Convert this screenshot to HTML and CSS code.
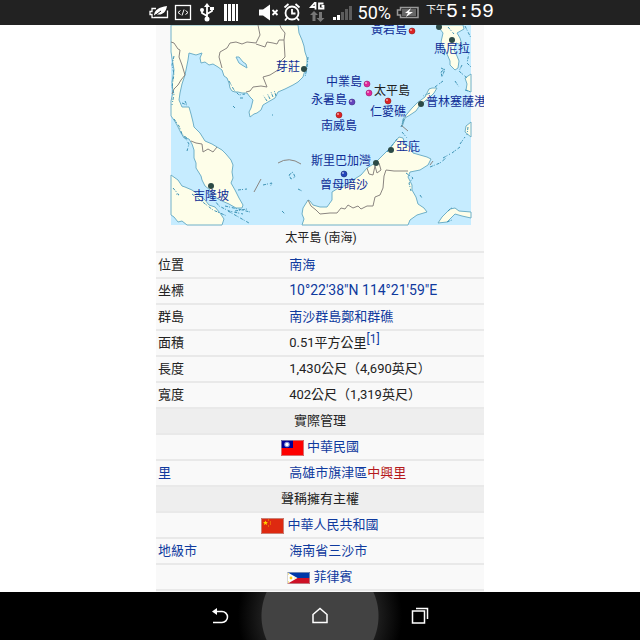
FILE: index.html
```html
<!DOCTYPE html>
<html lang="zh-Hant">
<head>
<meta charset="utf-8">
<meta name="viewport" content="width=device-width, initial-scale=1">
<title>太平島</title>
<link rel="stylesheet" href="styles.css">
</head>
<body>
<header class="status">
  <svg class="status-icons" width="92" height="24" viewBox="147 0 92 24" aria-hidden="true">
    <g fill="none" stroke="#fff" stroke-width="1.3">
      <path d="M155 8.500h-4v3h-2v3h2v3h15.500v-7"/>
      <path d="M153 16c0-6 5-9 13-10-1 7-6 10-11 8z" fill="#fff" stroke="none"/>
      <path d="M152 17l8-6" stroke="#222" stroke-width="1"/>
      <rect x="174.500" y="5.500" width="15" height="14"/>
      <path d="M179.500 10.500l-2.500 2 2.500 2M184.500 10.500l2.500 2-2.500 2M183 9.500l-2 6" stroke-width="1"/>
      <path d="M206 6v13M206 16l-5-3v-3M206 14l5-3v-2" stroke-width="1.800"/>
    </g>
    <g fill="#fff">
      <path d="M206 3l3 4h-6z"/><circle cx="206" cy="19" r="2.500"/><circle cx="201" cy="10" r="2"/><rect x="209" y="7" width="4" height="3"/>
      <path d="M223 4h3v17h-3zM227 4h3v17h-3zM231 4h3v17h-3zM235 4h2v17h-2z"/>
    </g>
  </svg>
  <svg class="status-icons" width="97" height="24" viewBox="257 0 97 24" aria-hidden="true">
    <path d="M258 9.500h4l7-5v16l-7-5h-4z" fill="#fff"/>
    <g fill="none" stroke="#fff" stroke-width="1.800">
      <path d="M271.500 10l5 5M276.500 10l-5 5"/>
      <circle cx="291" cy="13" r="6.500"/>
      <path d="M291 9v4.500h3.500M283.500 7.500l4-3.500M298.500 7.500l-4-3.500M286 18l-2 2.500M296 18l2 2.500"/>
      <path d="M314 2.500l-4 4.500h5M314.500 2v7.500M322.500 3.500h-4.500v5h4.500v-2.500h-2"/>
    </g>
    <path d="M313 11l4 4h-2.500v6h-3v-6h-2.500zM319.500 22l-4-4h2.500v-6h3v6h2.500z" fill="#777"/>
    <path d="M332 17h3v3h-3zM336 15h3v5h-3z" fill="#fff"/>
    <path d="M340 12h3v8h-3zM344 9h3v11h-3zM348 6h3v14h-3z" fill="#5c5c5c"/>
  </svg>
  <span class="percent">50%</span>
  <svg class="status-icons battery" width="24" height="24" viewBox="394 0 24 24" aria-hidden="true">
    <path d="M399.500 7.500h17.500v10h-17.500v-2.500h-3v-5h3z" fill="#222" stroke="#999" stroke-width="1.500"/>
    <path d="M401 9h14v7h-14z" fill="#666"/>
    <path d="M410 8l-6 5h3l-2 4 7-5h-4z" fill="#fff"/>
  </svg>
  <span class="ampm">下午</span>
  <time class="clock">5:59</time>
</header>

<main class="page">
  <section class="infobox">
    <figure class="location">
      <svg class="map" viewBox="171 25 300 200" role="img" aria-label="太平島 (南海)">
        <rect class="sea" x="171" y="25" width="300" height="200"/>
        <g class="land">
          <path d="M171 25H298L299 33 302 40 304 46 305 52 307 58 307 64 305 70 303 77 298 82 293 85 285 89 278 92 275 98 268 102 263 105 261 110 257 113 254 114 250 117 249 112 251 108 253 100 250 97 247 93 242 93 238 92 235 92 232 91 230 88 229 83 227 78 224 76 222 70 218 67 213 64 209 65 205 62 201 63 200 58 202 53 196 55 189 53 188 60 187 65 185 75 182 84 180 93 179 100 182 107 189 107 191 114 193 122 194 127 200 133 205 141 212 144 217 147 222 150 226 154 231 160 233 165 232 172 233 178 231 183 235 190 239 198 243 205 242 208 236 208 229 204 222 201 213 196 210 190 205 186 202 180 201 176 196 168 196 163 194 158 194 150 192 144 189 139 184 138 181 133 177 125 174 120 171 116V101L173 92 172 82 174 70 172 58 171 52Z"/>
          <path d="M171 175L178 180 182 186 185 187 192 190 199 195 205 200 209 205 215 207 220 213 224 219 222 225H187L182 221 178 222 174 217 171 215Z"/>
          <path d="M308 200L303 208 302 214 304 219 302 225H408L410 220 417 215 427 212 424 208 418 204 416 197 412 190 412 185 408 177 410 172 420 170 428 165 431 159 427 157 420 155 413 153 410 147 405 144 403 138 399 137 394 143 390 148 383 155 375 163 367 168 361 175 353 180 347 185 340 187 332 192 332 200 327 207 320 207 313 205 310 201Z"/>
          <path d="M437 25L443 33 441 42 444 48 447 54 450 61 450 65 455 70 458 68 459 61 457 56 454 50 456 43 462 45 460 38 457 33 464 29 463 25Z"/>
          <path d="M437 88L434 93 430 97 425 101 420 105 416 111 410 115 405 118 402 127 403 119 407 114 412 108 417 103 425 97 429 89 432 88Z"/>
          <path d="M471 74L465 78 467 84 466 90 471 92ZM471 122L466 126 465 132 471 137ZM438 223L442 217 450 209 455 208 459 211 471 212V218L462 216 455 214 447 222Z"/>
        </g>
        <path class="lake" d="M236 57l3 0 4 5 3 2 1 4-5-3-3-2z"/>
        <g class="border">
          <path d="M171 42L174 43 178 49 180 50 179 57 182 65 185 75 181 80 178 85 174 89 172 94"/>
          <path d="M258 25L260 35 256 43 247 42 242 44 236 42 230 43 227 48 220 52 219 57 222 68M256 44L265 47 267 42 273 43 277 44 279 40 284 40 285 33 281 28 280 25M284 40L285 57 280 62 278 70 270 75 263 77 265 82 267 87 261 86 253 87 250 91 246 92"/>
          <path d="M191 141L196 143 202 144 203 152 208 149 213 152 217 147"/>
          <path d="M308 200L311 206 316 210 320 214 330 213 337 213 341 208 345 209 348 205 353 208 358 206 361 209 367 206 373 206 375 197 380 195 383 188 384 176 386 170 394 171 408 171"/>
          <path d="M367 168L369 174 373 175 375 166 377 173 381 170 379 163"/>
          <path d="M278 163q11-7 23 1M261 179l-7 13M401 125l7 6M430 165l3-4"/>
        </g>
        <g class="islands">
          <path d="M174 56l-2 9 2 9-2 13 2 7-2 11M174 119l5 7 3 8 6 5M184 136l5 8-2 7M182 103l5 2-2-4M229 81l5 9 5 5 6-1M240 98l3 0M233 106l2 2M272 115l1 0"/>
          <path d="M267 101l-4-6M270 99l-3-6M273 97l-2-5M276 96l-2-6M308 57l-1 11-2 9"/>
          <path d="M192 194l12 9 9 7 14 6M212 197l7 9 10 5 14 3M225 206l13 3 12 3M228 211l14 8 7 4M235 211l12-2M173 188l6 7-3-1M263 185l9-2-2 4M238 190l9-1"/>
          <path d="M289 175l4-3 2 5-4 2zM298 189l4 2M282 211l3 3M387 152l10-13M402 132l5 6M406 173l7 5-4 5 2 8M420 195l2 3"/>
          <path d="M441 72l4-3-3 8zM443 81l-8 6M441 68l4 2M445 55l-4-3M448 27l6 7M465 26l6 12M461 46l8 7-2 10 4 4M455 81l4 6M462 65l-3 6 8 7M465 90l6 2M404 119l-3 8M430 93l-7 3"/>
          <path d="M430 167l10-4 6-5M443 158l7-4M452 153l8-6M460 144l5-7M468 127l-1 8M447 222l5-2M448 211l5-4"/>
        </g>
        <g class="city">
          <circle cx="304" cy="69" r="3"/><circle cx="439" cy="27" r="3"/><circle cx="452" cy="40" r="3"/><circle cx="421" cy="104" r="3"/><circle cx="391" cy="150" r="3"/><circle cx="376" cy="163" r="3"/><circle cx="211" cy="186" r="3"/>
        </g>
        <g class="pin red"><circle cx="412" cy="31" r="3"/><circle cx="388" cy="101" r="3"/><circle cx="339" cy="115" r="3"/></g>
        <g class="pin pink"><circle cx="367" cy="84" r="3"/><circle cx="369" cy="93" r="3"/></g>
        <g class="pin blue"><circle cx="344" cy="174" r="3"/></g>
        <g class="pin violet"><circle cx="352" cy="102" r="3"/></g>
        <g class="shine"><circle cx="411" cy="30" r="1"/><circle cx="387" cy="100" r="1"/><circle cx="338" cy="114" r="1"/><circle cx="366" cy="83" r="1"/><circle cx="368" cy="92" r="1"/><circle cx="343" cy="173" r="1"/><circle cx="351" cy="101" r="1"/></g>
        <g class="names">
          <text x="371" y="34">黃岩島</text><text x="434" y="53">馬尼拉</text><text x="276" y="71">芽莊</text>
          <text x="326" y="86">中業島</text><text class="here" x="374" y="95">太平島</text><text x="311" y="104">永暑島</text>
          <text x="370" y="116">仁愛礁</text><text x="426" y="106">普林塞薩港</text><text x="321" y="130">南威島</text>
          <text x="311" y="165">斯里巴加灣</text><text x="396" y="151">亞庇</text><text x="320" y="189">曾母暗沙</text><text x="193" y="200">吉隆坡</text>
        </g>
      </svg>
      <figcaption>太平島 (南海)</figcaption>
    </figure>
    <table class="facts">
      <tbody>
        <tr><th scope="row">位置</th><td><a href="#">南海</a></td></tr>
        <tr><th scope="row">坐標</th><td><a class="coordinates" href="#">10°22'38"N 114°21'59"E</a></td></tr>
        <tr><th scope="row">群島</th><td><a href="#">南沙群島鄭和群礁</a></td></tr>
        <tr><th scope="row">面積</th><td>0.51平方公里<a class="ref" href="#">[1]</a></td></tr>
        <tr><th scope="row">長度</th><td>1,430公尺（4,690英尺）</td></tr>
        <tr><th scope="row">寬度</th><td>402公尺（1,319英尺）</td></tr>
        <tr class="heading"><th colspan="2">實際管理</th></tr>
        <tr class="country"><th colspan="2">
          <svg class="flag" width="23" height="16" viewBox="0 0 23 16" aria-hidden="true"><path fill="#fe0000" d="M0 0h23v16H0z"/><path fill="#000095" d="M0 0h12v8H0z"/><circle cx="6" cy="4.500" r="2.800" fill="#8294dc"/><circle cx="6" cy="4.500" r="1.700" fill="#fff"/><path d="M.5.5h22v15h-22z" fill="none" stroke="#bbb" stroke-opacity=".6"/></svg>
          <a href="#">中華民國</a></th></tr>
        <tr><th scope="row"><a href="#">里</a></th><td><a href="#">高雄市旗津區</a><a class="missing" href="#">中興里</a></td></tr>
        <tr class="heading"><th colspan="2">聲稱擁有主權</th></tr>
        <tr class="country"><th colspan="2">
          <svg class="flag" width="23" height="16" viewBox="0 0 23 16" aria-hidden="true"><path fill="#de2910" d="M0 0h23v16H0z"/><path fill="#ffd500" d="M4.500 2.500l.7 1.600 1.800.1-1.400 1.100.5 1.700-1.600-1-1.600 1 .5-1.700-1.400-1.100 1.800-.1z"/><path fill="#f6a000" d="M7 1.500h1v1H7zM9 3.500h1v1H9zM9 5.500h1v1H9zM7 7.500h1v1H7z"/><path d="M.5.5h22v15h-22z" fill="none" stroke="#bbb" stroke-opacity=".6"/></svg>
          <a href="#">中華人民共和國</a></th></tr>
        <tr><th scope="row"><a href="#">地級市</a></th><td><a href="#">海南省三沙市</a></td></tr>
        <tr class="country"><th colspan="2">
          <svg class="flag" width="23" height="12" viewBox="0 0 23 12" aria-hidden="true"><path fill="#0038a8" d="M0 0h23v6H0z"/><path fill="#ce1126" d="M0 6h23v6H0z"/><path fill="#fff" d="M0 0l10.500 6L0 12z"/><circle cx="4" cy="6" r="1.400" fill="#fcd116"/><path fill="#fcd116" d="M1 1.500h1v1H1zM1 9.500h1v1H1zM7.500 5.500h1v1h-1z"/><path d="M.5.5h22v11h-22z" fill="none" stroke="#bbb" stroke-opacity=".6"/></svg>
          <a href="#">菲律賓</a></th></tr>
        <tr><td colspan="2"></td></tr>
      </tbody>
    </table>
  </section>
</main>

<nav class="keys" aria-label="系統導覽">
  <button type="button" aria-label="返回"><svg width="20" height="18" viewBox="0 0 20 18" fill="none" stroke="#fff" stroke-width="1.500"><path d="M6 4.500h6a5.500 5.500 0 0 1 0 11H3"/><path d="M7 1v7L2 4.500z" fill="#fff" stroke="none"/></svg></button>
  <button type="button" aria-label="主畫面"><svg width="20" height="18" viewBox="0 0 20 18" fill="none" stroke="#fff" stroke-width="1.500"><path d="M3 7.500L10 1.500l7 6v8H3z"/></svg></button>
  <button type="button" aria-label="最近使用"><svg width="20" height="18" viewBox="0 0 20 18" fill="none" stroke="#fff" stroke-width="1.500"><path d="M2.500 4h12v12h-12z"/><path d="M6 1.500h11.500V12"/></svg></button>
</nav>
</body>
</html>
```
FILE: styles.css
```css
* { box-sizing: border-box; }

body {
  margin: 0;
  height: 100vh;
  display: flex;
  flex-direction: column;
  overflow: hidden;
  background: #fff;
  color: #222;
  font-family: Roboto, "Noto Sans CJK TC", sans-serif;
  font-size: 13px;
}

a { color: #0f3a9e; text-decoration: none; }

.status {
  flex: none;
  height: 25px;
  padding-right: 146px;
  display: flex;
  justify-content: flex-end;
  background: #222;
  color: #fff;
  white-space: nowrap;
}
.status-icons { flex: none; margin-right: 18px; }
.status-icons + .percent { margin-left: -15px; }
.percent { font-size: 18px; line-height: 25px; }
.battery { margin: 0 7px 0 4px; }
.ampm { font-size: 10px; line-height: 19px; }
.clock {
  font-family: "Liberation Mono", monospace;
  font-size: 20px;
  line-height: 23px;
}

.page { flex: 1; min-height: 0; overflow: hidden; }

.infobox {
  max-width: 328px;
  margin: 0 auto;
  background: #f9f9f9;
  overflow: hidden;
}

.location { margin: 0; padding: 0 13px 0 15px; text-align: center; }
.map { display: block; width: 100%; overflow: visible; }
.location figcaption { font-size: 12px; line-height: 26px; }

.sea { fill: #c6ecff; }
.land { fill: #fefee9; stroke: #6fb0c8; stroke-width: 1; stroke-linejoin: round; }
.lake { fill: #c6ecff; stroke: #6fb0c8; }
.border { fill: none; stroke: #8a8580; stroke-width: 1; }
.islands { fill: none; stroke: #3d93b5; stroke-width: 1; stroke-dasharray: 3 1 1 2; }
.city { fill: #2c4a46; }
.pin { stroke-width: 1; stroke-opacity: .5; }
.red { fill: #d22; stroke: #811; }
.pink { fill: #e0269a; stroke: #8c1464; }
.blue { fill: #24b; stroke: #126; }
.violet { fill: #64b; stroke: #327; }
.shine { fill: #fff; fill-opacity: .6; }
.names { fill: #0f2d96; font-size: 12px; }
.names .here { fill: #222; }

.facts { width: 100%; border-collapse: collapse; table-layout: fixed; }
.facts tr { height: 26px; border-top: 2px solid #e9e9e9; }
.facts th, .facts td {
  padding: 0 2px;
  line-height: 24px;
  text-align: left;
  vertical-align: middle;
  white-space: nowrap;
}
.facts th { width: 40%; font-weight: 400; }
.facts .heading { background: #eee; }
.facts .heading th, .facts .country th { text-align: center; }
.facts .missing { color: #b5191c; }
.facts .coordinates { font-size: 14px; line-height: 1; }
.ref { font-size: 12px; line-height: 1; position: relative; top: -4px; }
.flag { vertical-align: middle; }

.keys {
  flex: none;
  height: 48px;
  display: flex;
  justify-content: center;
  overflow: hidden;
  background: radial-gradient(circle, #424242 58px, #1c1c1c 59px, #000 82px);
}
.keys button {
  width: 100px;
  padding: 0;
  border: 0;
  background: none;
  display: flex;
  align-items: center;
  justify-content: center;
}
```
